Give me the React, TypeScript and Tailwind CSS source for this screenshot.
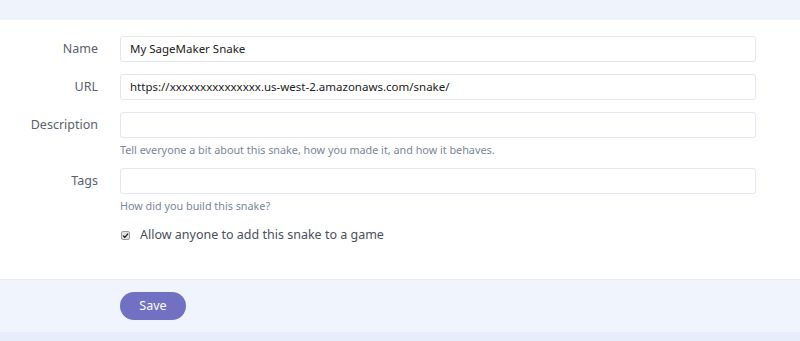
export default function App() {
  const font = { fontFamily: '"Noto Sans", "Open Sans", sans-serif' };
  return (
    <div className="w-[800px] h-[341px] bg-[#eef3fc] flex flex-col overflow-hidden" style={font}>
      <div className="h-[20px] shrink-0" />
      <div className="bg-white h-[259px] shrink-0 pt-[16px] pr-[44px]">
        <Row label="Name" value="My SageMaker Snake" />
        <Row label="URL" value="https://xxxxxxxxxxxxxxx.us-west-2.amazonaws.com/snake/" />
        <Row label="Description" value="" help="Tell everyone a bit about this snake, how you made it, and how it behaves." />
        <Row label="Tags" value="" help="How did you build this snake?" />
        <div className="flex items-center pl-[121px] mt-[14px]">
          <span className="w-[9px] h-[9px] rounded-[2px] border border-[#9a9a9a] bg-[#e4e4e4] flex items-center justify-center">
            <svg viewBox="0 0 10 10" className="w-[7px] h-[7px]">
              <path d="M1.5 5.2 L4 7.6 L8.6 2.2" fill="none" stroke="#111" strokeWidth="1.8" />
            </svg>
          </span>
          <span className="ml-[10px] text-[12.5px] text-[#4a505c]">Allow anyone to add this snake to a game</span>
        </div>
      </div>
      <div className="bg-[#f0f5fd] h-[53px] shrink-0 border-t border-[#e6ecf7] flex items-center pl-[120px]">
        <button className="w-[66px] h-[28px] rounded-full bg-[#7170c3] text-white text-[12.5px]">Save</button>
      </div>
      <div className="flex-1 bg-[#e7edfa]" />
    </div>
  );
}

function Row({ label, value, help }: { label: string; value: string; help?: string }) {
  return (
    <div className="flex items-start mb-[12px]">
      <div className="w-[98px] shrink-0 text-right text-[12.5px] text-[#5a606c] leading-[26px]">{label}</div>
      <div className="ml-[22px] flex-1">
        <div className="h-[26px] border border-[#e3e6ee] rounded-[3px] px-[9px] flex items-center text-[11.5px] text-[#222]">
          {value}
        </div>
        {help && <div className="text-[10.8px] leading-[14px] text-[#7b869a] mt-[5px] -mb-[1px]">{help}</div>}
      </div>
    </div>
  );
}
